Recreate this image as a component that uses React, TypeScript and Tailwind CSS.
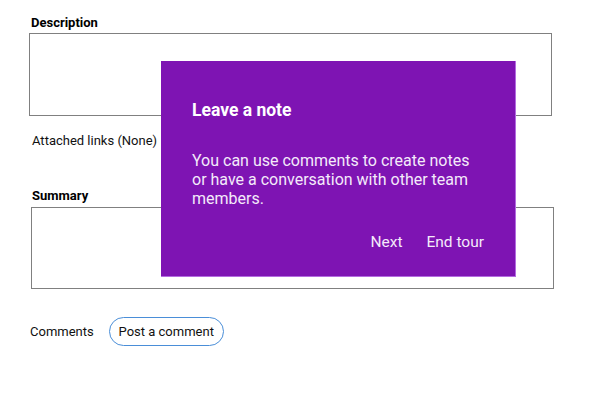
import React from "react";

export default function App() {
  return (
    <div className="relative w-[595px] h-[402px] bg-white overflow-hidden" style={{ fontFamily: "Roboto, 'Liberation Sans', sans-serif" }}>
      <div className="flex flex-col pt-[16px]">
        <div className="ml-[31px] text-[13px] font-bold leading-[14px] text-black">Description</div>
        <div className="ml-[29px] mt-[3px] w-[523px] h-[83px] border border-[#808080]"></div>
        <div className="ml-[32px] mt-[17px] text-[13px] leading-[16px] text-[#111]">Attached links (None)</div>
        <div className="ml-[32px] mt-[40px] text-[13px] font-bold leading-[14px] text-black">Summary</div>
        <div className="ml-[31px] mt-[4px] w-[523px] h-[82px] border border-[#808080]"></div>
        <div className="flex items-center mt-[28px] ml-[30px]">
          <span className="text-[13px] leading-[16px] text-[#111]">Comments</span>
          <button className="ml-[15px] w-[115px] h-[29px] rounded-full border-[1.5px] border-[#4a8ed8] bg-white text-[13px] text-[#111] flex items-center justify-center">
            Post a comment
          </button>
        </div>
      </div>

      <div className="absolute left-[161px] top-[61px] w-[355px] h-[216px] bg-[#7e14b3] border-r border-b border-[#b36be0] flex flex-col pl-[31px] pr-[30px]">
        <div className="mt-[38px] text-[17.5px] font-bold leading-[22px] text-white">Leave a note</div>
        <div className="mt-[30px] text-[16px] leading-[19px] text-[#f4eafa] w-[290px]">
          You can use comments to create notes or have a conversation with other team members.
        </div>
        <div className="flex justify-end mt-[24px] gap-[24px] pr-[1px] text-[15.5px] leading-[20px] text-[#f4eafa]">
          <span>Next</span>
          <span>End tour</span>
        </div>
      </div>
    </div>
  );
}
